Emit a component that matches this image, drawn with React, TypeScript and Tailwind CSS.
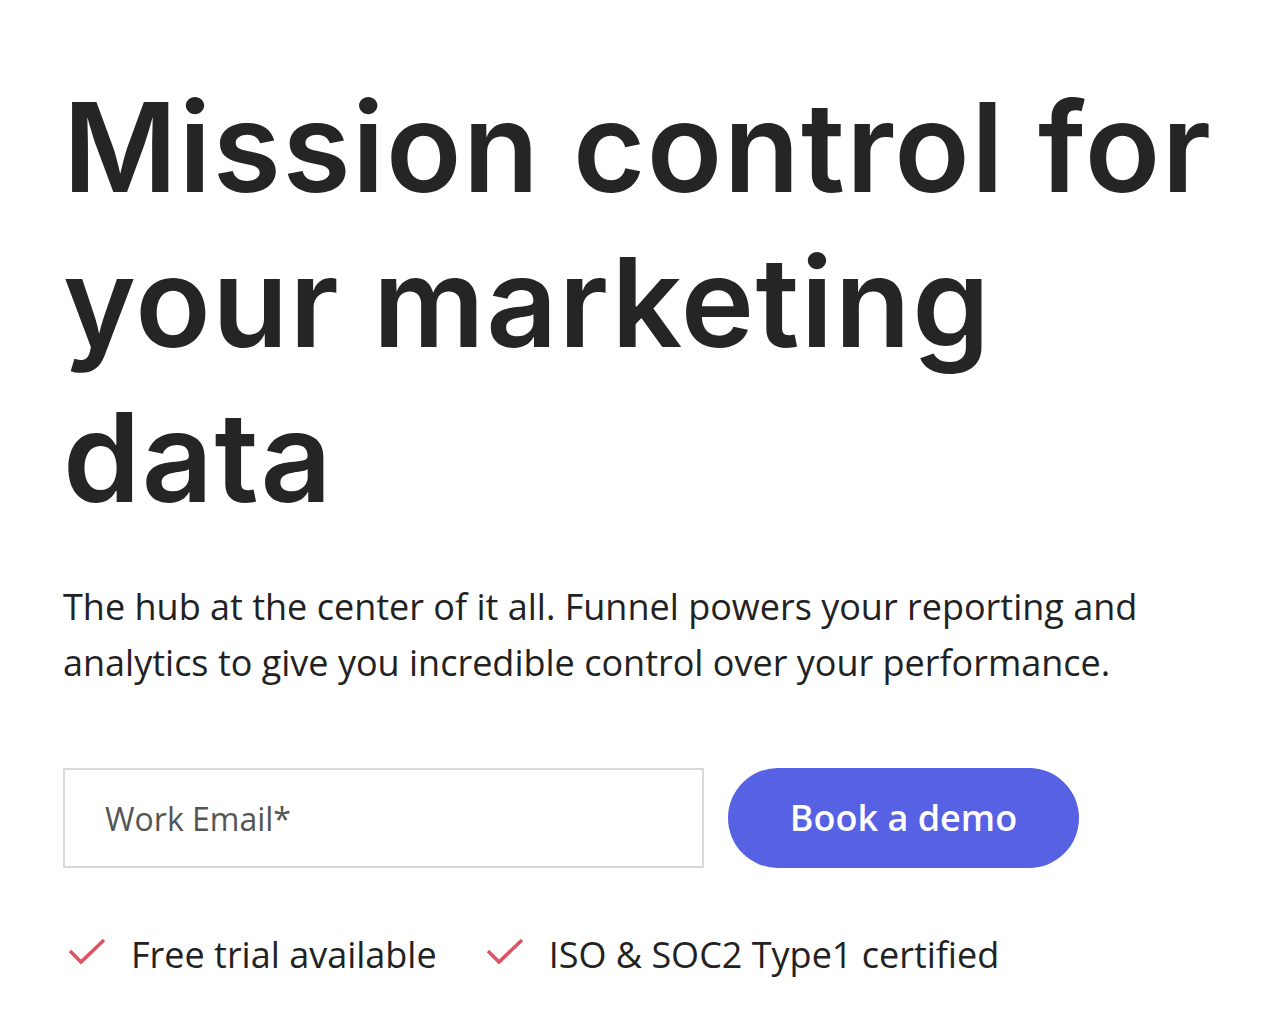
function Check() {
  return (
    <svg viewBox="0 0 40 30" className="-mt-2 h-[30px] w-[40px] shrink-0" fill="none">
      <path d="M3 15 L14 26 L37 4" stroke="#e0525f" strokeWidth="3.5" />
    </svg>
  );
}

export default function App() {
  return (
    <div className="min-h-screen bg-white px-[63px] pt-[70px] text-[#252525]">
      <h1 className="-mr-[60px] whitespace-nowrap font-['Inter',sans-serif] text-[124px] font-semibold leading-[155px] tracking-[0.012em]">
        Mission control for
        <br />
        your marketing
        <br />
        data
      </h1>

      <p className="mt-[44px] max-w-[1100px] font-['Open_Sans',sans-serif] text-[36px] leading-[56px] text-[#222]">
        The hub at the center of it all. Funnel powers your reporting and analytics to give you
        incredible control over your performance.
      </p>

      <form className="mt-[77px] flex gap-6">
        <input
          type="email"
          placeholder="Work Email*"
          className="h-[100px] w-[641px] border-2 border-[#d9d9d9] px-10 font-['Open_Sans',sans-serif] text-[32px] text-[#222] placeholder:text-[#555] outline-none"
        />
        <button
          type="button"
          className="h-[100px] w-[351px] rounded-full bg-[#5661e3] font-['Open_Sans',sans-serif] text-[36px] font-semibold text-white"
        >
          Book a demo
        </button>
      </form>

      <ul className="mt-[60px] flex items-center gap-12 font-['Open_Sans',sans-serif] text-[36px] text-[#222]">
        <li className="flex items-center gap-6 pl-1">
          <Check />
          Free trial available
        </li>
        <li className="flex items-center gap-6">
          <Check />
          ISO &amp; SOC2 Type1 certified
        </li>
      </ul>
    </div>
  );
}
